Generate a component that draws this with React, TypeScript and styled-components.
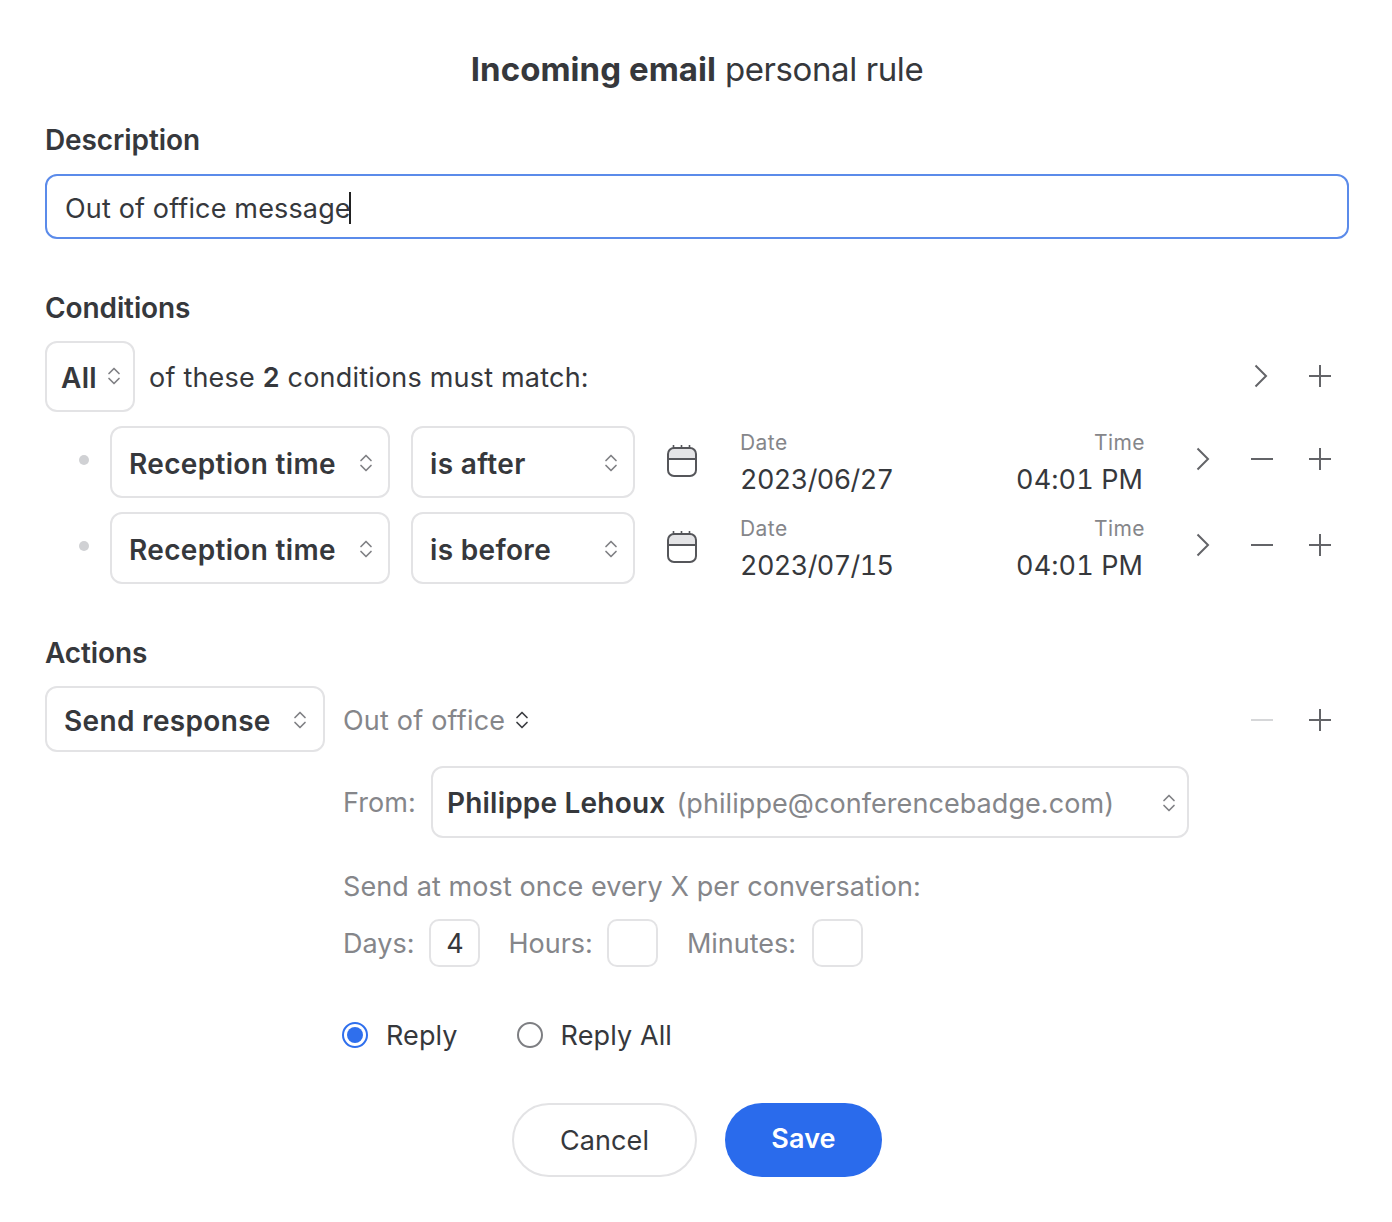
import React from "react";
import styled, { createGlobalStyle } from "styled-components";

const Global = createGlobalStyle`
  html, body { margin: 0; padding: 0; background: #fff; }
  body { font-family: Inter, "Liberation Sans", sans-serif; color: #36383c; }
`;

const Page = styled.div`
  width: 1392px;
  height: 1222px;
  box-sizing: border-box;
  padding: 48px 43px 0 45px;
  display: flex;
  flex-direction: column;
  overflow: hidden;
`;
const Title = styled.h1`
  margin: 0 0 31px;
  height: 42px;
  line-height: 42px;
  font-size: 33px;
  font-weight: 400;
  text-align: center;
  letter-spacing: -0.4px;
  b { font-weight: 700; letter-spacing: 0.05px; }
`;
const Label = styled.h2<{ $mb: number; $mt?: number }>`
  margin: ${(p) => p.$mt ?? 0}px 0 ${(p) => p.$mb}px;
  height: 36px;
  line-height: 39px;
  font-size: 28px;
  font-weight: 600;
  letter-spacing: -0.1px;
`;
const TextInput = styled.div`
  box-sizing: border-box;
  height: 65px;
  border: 2px solid #5b8bea;
  border-radius: 12px;
  padding: 3px 18px 0;
  display: flex;
  align-items: center;
  font-size: 27px;
  letter-spacing: 0.15px;
  margin-bottom: 50px;
`;
const Caret = styled.span`
  display: inline-block;
  width: 2px;
  height: 32px;
  margin-left: -2px;
  background: #222;
`;
const Select = styled.div<{ $w: number; $h: number; $pl?: number; $pr?: number; $ml?: number; $pt?: number; $iy?: number }>`
  box-sizing: border-box;
  flex: none;
  width: ${(p) => p.$w}px;
  height: ${(p) => p.$h}px;
  margin-left: ${(p) => p.$ml ?? 0}px;
  border: 2px solid #e3e3e5;
  border-radius: 12px;
  padding: ${(p) => p.$pt ?? 4}px ${(p) => p.$pr ?? 15}px 0 ${(p) => p.$pl ?? 17}px;
  display: flex;
  align-items: center;
  justify-content: space-between;
  font-size: 28px;
  font-weight: 600;
  letter-spacing: 0.33px;
  color: #36383c;
  background: #fff;
  svg { margin-top: ${(p) => p.$iy ?? -2}px; }
`;
const SummaryRow = styled.div`
  display: flex;
  align-items: center;
  height: 70px;
  font-size: 27px;
  letter-spacing: 0.2px;
  margin-bottom: 16px;
  b { font-weight: 600; }
`;
const Summary = styled.span`
  margin-left: 14px;
  padding-top: 3px;
  flex: 1;
`;
const CondRow = styled.div`
  display: flex;
  align-items: center;
  height: 70px;
  margin-bottom: 16px;
  &:last-of-type { margin-bottom: 0; }
`;
const Dot = styled.span`
  flex: none;
  width: 10px;
  height: 10px;
  margin: -5px 21px 0 34px;
  background: #d0d1d4;
  border-radius: 50%;
`;
const CalWrap = styled.span`
  flex: none;
  display: flex;
  width: 32px;
  margin: -2px 42px 0 31px;
`;
const Field = styled.div<{ $w: number; $right?: boolean }>`
  flex: none;
  width: ${(p) => p.$w}px;
  padding-top: 6px;
  text-align: ${(p) => (p.$right ? "right" : "left")};
  small {
    display: block;
    font-size: 21px;
    line-height: 28px;
    color: #85868a;
    letter-spacing: 0.45px;
    margin-right: ${(p) => (p.$right ? "-2px" : "0")};
  }
  span {
    display: block;
    font-size: 27px;
    line-height: 44px;
    margin-top: 1px;
    letter-spacing: ${(p) => (p.$right ? "0.1px" : "-0.6px")};
    font-variant-numeric: tabular-nums;
    font-feature-settings: "tnum", "kern" 0;
  }
`;
const Actions = styled.div`
  flex: none;
  display: flex;
  align-items: center;
  margin: -6px 0 0 auto;
`;
const IconSlot = styled.span<{ $w: number; $ml?: number; $mr?: number }>`
  display: flex;
  justify-content: center;
  flex: none;
  width: ${(p) => p.$w}px;
  margin-left: ${(p) => p.$ml ?? 0}px;
  margin-right: ${(p) => p.$mr ?? 0}px;
`;
const ActionTop = styled.div`
  display: flex;
  align-items: flex-start;
`;
const Details = styled.div`
  flex: 1;
  margin-left: 18px;
  padding-top: 15px;
`;
const PickerRow = styled.div`
  display: flex;
  align-items: center;
  height: 38px;
  color: #85868a;
  font-size: 27px;
  letter-spacing: 0.2px;
  margin-bottom: 27px;
`;
const Picker = styled.span`
  display: flex;
  align-items: center;
  gap: 10px;
  flex: 1;
`;
const FromRow = styled.div`
  display: flex;
  align-items: center;
  gap: 15px;
  color: #85868a;
  font-size: 27px;
  letter-spacing: 0.1px;
  margin-bottom: 29px;
`;
const FromValue = styled.span`
  white-space: nowrap;
  letter-spacing: 0.2px;
  i {
    font-style: normal;
    font-size: 27px;
    font-weight: 400;
    color: #85868a;
    margin-left: 11px;
    letter-spacing: 0.07px;
  }
`;
const Hint = styled.div`
  color: #85868a;
  font-size: 27px;
  letter-spacing: 0.1px;
  line-height: 40px;
  margin-bottom: 12px;
`;
const Durations = styled.div`
  display: flex;
  align-items: center;
  color: #85868a;
  font-size: 27px;
  margin-bottom: 49px;
`;
const Box = styled.span<{ $ml: number; $mr: number }>`
  box-sizing: border-box;
  width: 51px;
  height: 48px;
  margin: 0 ${(p) => p.$mr}px 0 ${(p) => p.$ml}px;
  border: 2px solid #e3e3e5;
  border-radius: 10px;
  display: flex;
  align-items: center;
  justify-content: center;
  color: #36383c;
`;
const Radios = styled.div`
  display: flex;
  align-items: center;
  font-size: 27px;
  letter-spacing: 0.1px;
  height: 38px;
`;
const Radio = styled.span<{ $on?: boolean }>`
  box-sizing: border-box;
  width: 26px;
  height: 26px;
  border-radius: 50%;
  border: 2px solid ${(p) => (p.$on ? "#2f6fed" : "#7d7e82")};
  padding: 3px;
  margin-left: -1px;
  margin-right: 18px;
  &::after {
    content: "";
    display: ${(p) => (p.$on ? "block" : "none")};
    width: 16px;
    height: 16px;
    border-radius: 50%;
    background: #2f6fed;
  }
`;
const RadioLabel = styled.span<{ $mr?: number }>`
  margin-right: ${(p) => p.$mr ?? 0}px;
`;
const Buttons = styled.div`
  display: flex;
  justify-content: center;
  gap: 28px;
  margin-top: 49px;
`;
const Btn = styled.button<{ $primary?: boolean }>`
  height: 74px;
  width: ${(p) => (p.$primary ? 157 : 185)}px;
  border-radius: 37px;
  box-sizing: border-box;
  font: ${(p) => (p.$primary ? 600 : 400)} 27px Inter, sans-serif;
  letter-spacing: 0.1px;
  color: ${(p) => (p.$primary ? "#fff" : "#36383c")};
  background: ${(p) => (p.$primary ? "#2a6bec" : "#fff")};
  border: ${(p) => (p.$primary ? "none" : "2px solid #e3e3e5")};
  padding: ${(p) => (p.$primary ? "0 0 3px" : "0")};
`;

const Updown = ({ dark }: { dark?: boolean }) => (
  <svg width="14" height="20" viewBox="0 0 14 20" fill="none" stroke={dark ? "#3c3e42" : "#808185"} strokeWidth="1.7" strokeLinecap="round" strokeLinejoin="round">
    <path d="M2 7.5 7 2.5l5 5M2 12.5l5 5 5-5" />
  </svg>
);
const Calendar = () => (
  <svg width="32" height="34" viewBox="0 0 32 34" fill="none" stroke="#55565a" strokeWidth="2">
    <path d="M2 15V8a4 4 0 0 1 4-4h20a4 4 0 0 1 4 4v7z" fill="#e4e4e6" stroke="none" />
    <rect x="2" y="4" width="28" height="28" rx="6" />
    <path d="M2 15h28" />
    <path d="M7.5 1v3M15.5 1v3M23.5 1v3" strokeWidth="1.6" />
  </svg>
);
const Chevron = () => (
  <svg width="14" height="24" viewBox="0 0 14 24" fill="none" stroke="#636468" strokeWidth="2">
    <path d="M1.5 1.5 12 12 1.5 22.5" />
  </svg>
);
const Plus = () => (
  <svg width="22" height="22" viewBox="0 0 22 22" fill="none" stroke="#636468" strokeWidth="2">
    <path d="M0 11h22M11 0v22" />
  </svg>
);
const Minus = ({ faint }: { faint?: boolean }) => (
  <svg width="22" height="22" viewBox="0 0 22 22" fill="none" stroke={faint ? "#d6d7d9" : "#636468"} strokeWidth="2">
    <path d="M0 11h22" />
  </svg>
);

const Condition = ({ op, date }: { op: string; date: string }) => (
  <CondRow>
    <Dot />
    <Select $w={280} $h={72}>Reception time<Updown /></Select>
    <Select $w={224} $h={72} $ml={21}>{op}<Updown /></Select>
    <CalWrap><Calendar /></CalWrap>
    <Field $w={199}><small>Date</small><span>{date}</span></Field>
    <Field $w={204} $right><small>Time</small><span>04:01 PM</span></Field>
    <Actions>
      <IconSlot $w={14}><Chevron /></IconSlot>
      <IconSlot $w={22} $ml={41}><Minus /></IconSlot>
      <IconSlot $w={22} $ml={36} $mr={18}><Plus /></IconSlot>
    </Actions>
  </CondRow>
);

export default function App() {
  return (
    <Page>
      <Global />
      <Title><b>Incoming email</b> personal rule</Title>
      <Label $mb={17}>Description</Label>
      <TextInput>Out of office message<Caret /></TextInput>
      <Label $mb={16}>Conditions</Label>
      <SummaryRow>
        <Select $w={90} $h={71} $pl={14} $pr={12} $iy={-4}>All<Updown /></Select>
        <Summary>of these <b>2</b> conditions must match:</Summary>
        <IconSlot $w={14}><Chevron /></IconSlot>
        <IconSlot $w={22} $ml={41} $mr={18}><Plus /></IconSlot>
      </SummaryRow>
      <Condition op="is after" date="2023/06/27" />
      <Condition op="is before" date="2023/07/15" />
      <Label $mb={16} $mt={35}>Actions</Label>
      <ActionTop>
        <Select $w={280} $h={66} $pr={16}>Send response<Updown /></Select>
        <Details>
          <PickerRow>
            <Picker>Out of office <Updown dark /></Picker>
            <IconSlot $w={22}><Minus faint /></IconSlot>
            <IconSlot $w={22} $ml={36} $mr={18}><Plus /></IconSlot>
          </PickerRow>
          <FromRow>
            From:
            <Select $w={758} $h={72} $pl={14} $pr={11} $pt={1} $iy={0}>
              <FromValue>Philippe Lehoux<i>(philippe@conferencebadge.com)</i></FromValue>
              <Updown />
            </Select>
          </FromRow>
          <Hint>Send at most once every X per conversation:</Hint>
          <Durations>
            Days:<Box $ml={15} $mr={28}>4</Box>
            Hours:<Box $ml={14} $mr={29} />
            Minutes:<Box $ml={16} $mr={0} />
          </Durations>
          <Radios>
            <Radio $on />
            <RadioLabel $mr={60}>Reply</RadioLabel>
            <Radio />
            <RadioLabel>Reply All</RadioLabel>
          </Radios>
        </Details>
      </ActionTop>
      <Buttons>
        <Btn>Cancel</Btn>
        <Btn $primary>Save</Btn>
      </Buttons>
    </Page>
  );
}
